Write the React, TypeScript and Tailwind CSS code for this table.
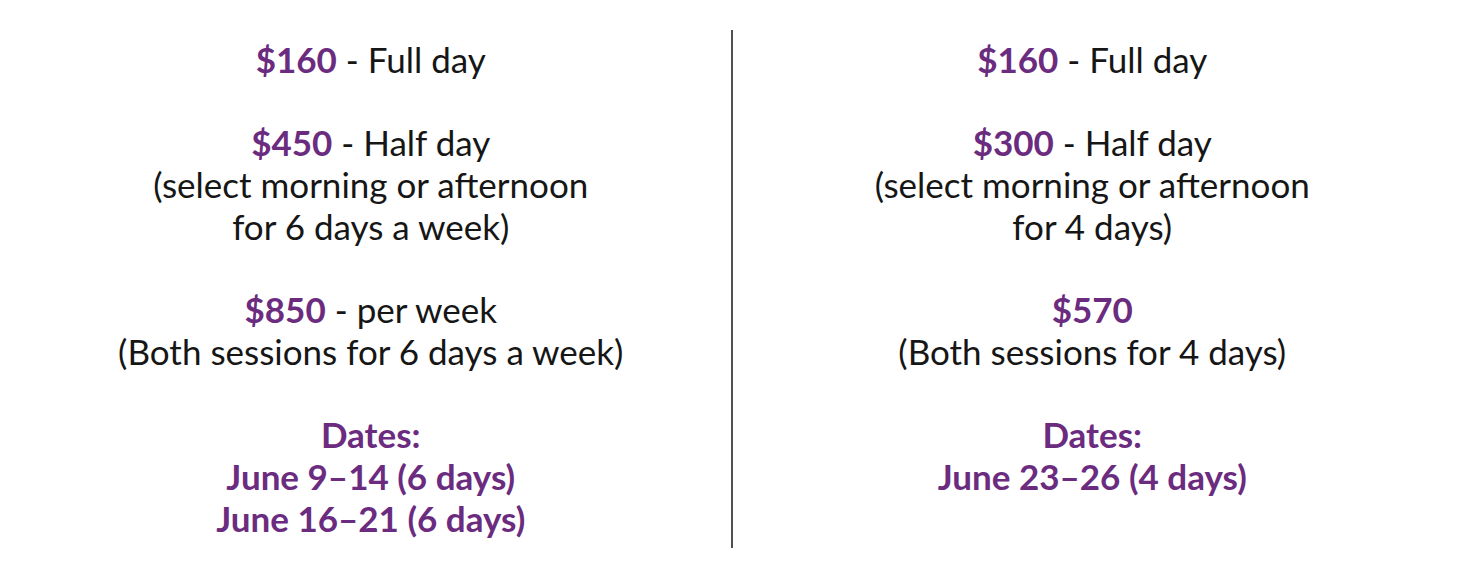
export default function App() {
  const price = "font-bold text-[#6b2c80]"

  return (
    <div className="w-[1464px] h-[578px] bg-white font-['Lato','Liberation_Sans',sans-serif] text-[35px] leading-[41.7px] text-[#161616]">
      <div className="flex pl-[11px] pr-[12px] pt-[30px]">
        {/* left column */}
        <div className="flex-1 flex flex-col items-center text-center pt-[9px] gap-[41.7px]">
          <p>
            <span className={price}>$160</span> - Full day
          </p>
          <p>
            <span className={price}>$450</span> - Half day
            <br />
            (select morning or afternoon
            <br />
            for 6 days a week)
          </p>
          <p>
            <span className={price}>$850</span> - per week
            <br />
            (Both sessions for 6 days a week)
          </p>
          <p className={price}>
            Dates:
            <br />
            June 9–14 (6 days)
            <br />
            June 16–21 (6 days)
          </p>
        </div>

        <div className="w-[2px] h-[518px] bg-[#505050]" />

        {/* right column */}
        <div className="flex-1 flex flex-col items-center text-center pt-[9px] gap-[41.7px]">
          <p>
            <span className={price}>$160</span> - Full day
          </p>
          <p>
            <span className={price}>$300</span> - Half day
            <br />
            (select morning or afternoon
            <br />
            for 4 days)
          </p>
          <p>
            <span className={price}>$570</span>
            <br />
            (Both sessions for 4 days)
          </p>
          <p className={price}>
            Dates:
            <br />
            June 23–26 (4 days)
          </p>
        </div>
      </div>
    </div>
  )
}
